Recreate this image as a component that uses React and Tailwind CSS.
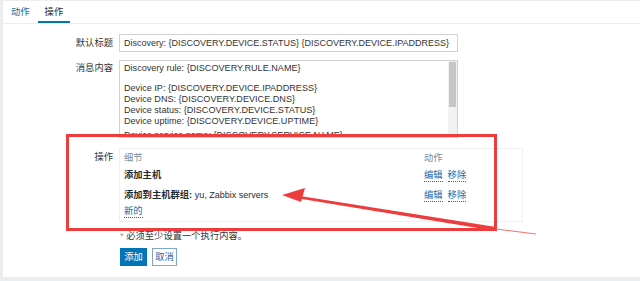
import React from 'react';

const font = { fontFamily: '"Liberation Sans", Arial, "Noto Sans CJK SC", sans-serif' };

function Link({ children }) {
  return <span className="text-[#1f65a6] border-b border-dotted border-[#1f65a6] leading-[12px]">{children}</span>;
}

function En({ children }) {
  return <span className="text-[9px]">{children}</span>;
}

export default function App() {
  return (
    <div className="relative w-[640px] h-[281px] bg-[#ebeef0] overflow-hidden text-[9.3px] leading-[12px] text-[#1f2c33]" style={font}>
      <div className="absolute inset-0 pt-[1px] pl-[3px] pb-[4px]">
        <div className="h-full bg-white flex flex-col">
          {/* tabs */}
          <div className="h-[23px] border-b border-[#eceef0] flex items-end pl-[8px] gap-[8px]">
            <div className="pb-[5px] text-[#1f65a6]">动作</div>
            <div className="pb-[3px] px-[7px] border-b-[2px] border-[#0275b8] text-[#1f2c33]">操作</div>
          </div>

          <div className="flex flex-col">
            {/* 默认标题 */}
            <div className="flex items-start mt-[10px]">
              <div className="w-[110px] text-right pt-[3px] text-[#333]">默认标题</div>
              <div className="ml-[6px] w-[339px] h-[18px] border border-[#cdd3d6] px-[4px] leading-[16px] text-[#333] whitespace-nowrap">
                <En>Discovery: {'{DISCOVERY.DEVICE.STATUS}'} {'{DISCOVERY.DEVICE.IPADDRESS}'}</En>
              </div>
            </div>

            {/* 消息内容 */}
            <div className="flex items-start mt-[8px]">
              <div className="w-[110px] text-right pt-[2px] text-[#333]">消息内容</div>
              <div className="ml-[6px] w-[339px] h-[78px] border border-[#cdd3d6] flex overflow-hidden">
                <div className="flex-1 px-[4px] pt-[2px] leading-[11px] text-[#333] text-[9.1px] whitespace-nowrap">
                  <div>Discovery rule: {'{DISCOVERY.RULE.NAME}'}</div>
                  <div className="h-[9px]"></div>
                  <div>Device IP: {'{DISCOVERY.DEVICE.IPADDRESS}'}</div>
                  <div>Device DNS: {'{DISCOVERY.DEVICE.DNS}'}</div>
                  <div>Device status: {'{DISCOVERY.DEVICE.STATUS}'}</div>
                  <div>Device uptime: {'{DISCOVERY.DEVICE.UPTIME}'}</div>
                  <div className="mt-[3px]">Device service name: {'{DISCOVERY.SERVICE.NAME}'}</div>
                </div>
                <div className="w-[9px] bg-[#f1f1f1] pt-[1px] px-[1px]">
                  <div className="h-[45px] bg-[#c4c7c9]"></div>
                </div>
              </div>
            </div>

            {/* 操作 */}
            <div className="flex items-start mt-[10px]">
              <div className="w-[110px] text-right pt-[3px] text-[#333]">操作</div>
              <div className="ml-[6px] w-[404px] h-[74px] border border-[#eef0f1] px-[4px] flex flex-col">
                <div className="flex h-[17px] items-center text-[#768d99]">
                  <div className="flex-1">细节</div>
                  <div className="w-[94px]">动作</div>
                </div>
                <div className="flex h-[18px] items-center">
                  <div className="flex-1 font-bold">添加主机</div>
                  <div className="w-[94px] flex gap-[5px]"><Link>编辑</Link><Link>移除</Link></div>
                </div>
                <div className="flex h-[18px] items-center mt-[2px]">
                  <div className="flex-1"><span className="font-bold">添加到主机群组:</span> <En>yu, Zabbix servers</En></div>
                  <div className="w-[94px] flex gap-[5px]"><Link>编辑</Link><Link>移除</Link></div>
                </div>
                <div className="flex h-[14px] items-center"><Link>新的</Link></div>
              </div>
            </div>

            <div className="pl-[117px] mt-[8px] text-[#333]">
              <span className="text-[#999]">*</span> 必须至少设置一个执行内容。
            </div>

            <div className="pl-[117px] mt-[6px] flex gap-[5px]">
              <div className="h-[18px] w-[27px] text-center bg-[#0275b8] text-white leading-[18px]">添加</div>
              <div className="h-[18px] w-[25px] text-center border border-[#7ea7c8] text-[#1f65a6] leading-[16px]">取消</div>
            </div>
          </div>
        </div>
      </div>

      {/* annotation: red box and arrow */}
      <div className="absolute left-[66px] top-[134px] w-[431px] h-[97px] border-[3px] border-[#ee3b3b]"></div>
      <svg className="absolute inset-0 pointer-events-none" width="640" height="281">
        <line x1="496" y1="229" x2="536" y2="234" stroke="#f07070" strokeWidth="1" />
        <polygon points="496,227 300,196 302,199 496,231" fill="#ee3b3b" />
        <polygon points="282,195 305,188 301,202" fill="#ee3b3b" />
      </svg>
    </div>
  );
}
